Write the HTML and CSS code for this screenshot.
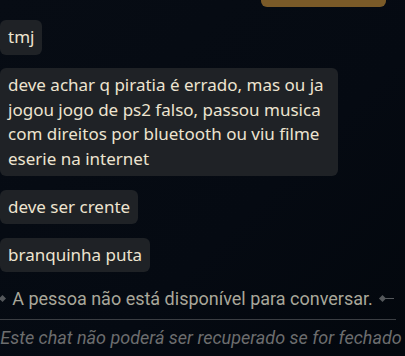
FILE: index.html
```html
<!DOCTYPE html>
<html lang="pt">
<head>
<meta charset="utf-8">
<link rel="stylesheet" href="styles.css">
</head>
<body>
<div class="chat">
  <div class="top-row"><div class="mine"></div></div>
  <div class="messages">
    <div class="bubble">tmj</div>
    <div class="bubble">deve achar q piratia é errado, mas ou ja jogou jogo de ps2 falso, passou musica com direitos por bluetooth ou viu filme eserie na internet</div>
    <div class="bubble">deve ser crente</div>
    <div class="bubble">branquinha puta</div>
  </div>
  <div class="status">
    <span class="deco left"><i class="line"></i><i class="dia"></i></span>
    <span class="status-text">A pessoa não está disponível para conversar.</span>
    <span class="deco right"><i class="dia"></i><i class="line"></i></span>
  </div>
  <div class="footer">
    <span class="notice">Este chat não poderá ser recuperado se for fechado</span>
  </div>
</div>
</body>
</html>
```

FILE: styles.css
```css
html, body {
  margin: 0;
  height: 100%;
}
body {
  background: linear-gradient(135deg, #070c14 0%, #050a12 60%, #03070d 100%);
  overflow: hidden;
}
.chat {
  width: 405px;
  height: 356px;
  display: flex;
  flex-direction: column;
  overflow: hidden;
}
.top-row {
  display: flex;
  justify-content: flex-end;
  padding-right: 19px;
  height: 7px;
  flex: none;
}
.mine {
  width: 125px;
  height: 7px;
  background: #7a5a28;
  border-radius: 0 0 6px 6px;
}
.messages {
  display: flex;
  flex-direction: column;
  align-items: flex-start;
  gap: 13.5px;
  padding-top: 13px;
  width: 338px;
}
.bubble {
  background: #1f2226;
  color: #ede4d0;
  font-family: "Noto Sans", sans-serif;
  font-size: 17px;
  line-height: 24.5px;
  padding: 5px 8px;
  border-radius: 6px;
}
.status {
  display: flex;
  align-items: center;
  justify-content: center;
  gap: 7px;
  margin-top: 14px;
  padding-right: 20px;
  height: 24px;
  flex: none;
}
.status-text {
  font-family: Roboto, sans-serif;
  font-size: 18px;
  color: #a9a79a;
  white-space: nowrap;
}
.deco {
  display: flex;
  align-items: center;
}
.dia {
  width: 5px;
  height: 5px;
  background: #55585c;
  transform: rotate(45deg);
  display: block;
}
.line {
  width: 9px;
  height: 1px;
  background: #55585c;
  display: block;
}
.footer {
  margin-top: 9px;
  border-top: 1px solid #3b3e43;
  margin-right: 9px;
  display: flex;
  justify-content: center;
  padding-top: 7px;
  padding-left: 6px;
  flex: none;
}
.notice {
  font-family: Roboto, sans-serif;
  font-style: italic;
  font-size: 18px;
  color: #6c6d6e;
  white-space: nowrap;
}
```
